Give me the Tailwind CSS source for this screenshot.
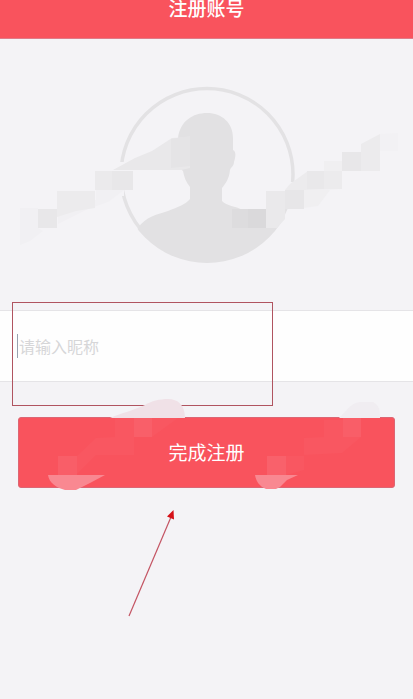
<!DOCTYPE html>
<html lang="zh-CN">
<head>
    <meta charset="UTF-8" />
    <meta name="viewport" content="width=device-width, initial-scale=1.0" />
    <title>注册账号</title>
    <script src="https://cdn.jsdelivr.net/npm/@tailwindcss/browser@4"></script>
</head>
<body class="bg-[#f4f3f6] min-h-screen overflow-x-hidden font-['Liberation_Sans','Noto_Sans_CJK_SC',sans-serif]">
    <header class="h-[39px] bg-[#f9535d] border-b border-[#e07b88] text-center">
        <h1 class="text-[19px] leading-5 font-medium text-white">注册账号</h1>
    </header>

    <main>
        <!-- Avatar -->
        <svg class="block w-full h-[271px]" viewBox="0 39 413 271" role="img" aria-label="头像">
            <defs>
                <clipPath id="avatar"><circle cx="207" cy="175" r="88" /></clipPath>
            </defs>
            <circle cx="207" cy="174.500" r="86" fill="none" stroke="#e3e2e4" stroke-width="3.500" />
            <path clip-path="url(#avatar)" fill="#e2e1e3" d="M178 138C180 121 193 113 207 113C222 113 233 123 233 138V150C236 151 236 156 234 162C234 166 231 167 230 170C229 179 226 183 222 188V201C227 206 235 206 243 210C258 214 276 219 283 225L290 270H120L138 228C145 217 158 214 168 211C178 207 186 204 190 199V187C186 182 184 177 183 171C179 168 178 163 178 158Z" />
            <path fill="#f4f3f6" d="M116 162H124V196H116ZM290 182H298V213H290Z" />
            <path fill="#e9e8ea" d="M113 170L135 158L152 151L172 138L190 137V168L181 170Z" />
            <path fill="#e5e4e6" d="M171 139L190 136V166L171 168Z" />
            <path fill="#ebeaec" d="M95 171H133V190H95Z" />
            <path fill="#e8e7e9" d="M112 171H133V190H112Z" />
            <path fill="#f1f0f3" d="M96 190H124L108 202L88 209L58 224V208L96 200Z" />
            <path fill="#ecebed" d="M57 191H95V208L76 211L57 217Z" />
            <path fill="#f1f0f3" d="M20 208H38V228L43 231L30 241L20 245Z" />
            <path fill="#e8e7e9" d="M38 209H57V228H38Z" />
            <path fill="#dddcde" d="M232 209H266V228H232Z" />
            <path fill="#dad9db" d="M248 209H266V228H248Z" />
            <path fill="#eae9eb" d="M266 191H285V219L277 228H266Z" />
            <path fill="#e7e6e8" d="M285 190H304V209H285Z" />
            <path fill="#f0eff1" d="M304 190H330L318 206L304 208ZM324 161H342V172L324 171Z" />
            <path fill="#ecebed" d="M290 184L308 171H342V189L304 190H285Z" />
            <path fill="#e9e8ea" d="M307 171H324V189H307Z" />
            <path fill="#e8e7e9" d="M342 152H361V171H342Z" />
            <path fill="#ecebed" d="M361 144L380 134V171H361Z" />
            <path fill="#f2f1f4" d="M380 134L398 133V151H380Z" />
        </svg>

        <form>
            <!-- Nickname -->
            <div class="relative h-[72px] flex items-center pl-[17px] bg-[#fefefe] border-y border-[#e5e4e7]">
                <span class="w-px h-6 bg-gray-400"></span>
                <input type="text" aria-label="昵称" placeholder="请输入昵称" class="flex-1 min-w-0 h-full bg-transparent pl-px pt-[3px] text-[16px] text-gray-700 placeholder:text-[#d6d6d8] outline-none" />
                <div class="absolute left-3 -top-[9px] w-[261px] h-[104px] border border-[#b05460] pointer-events-none"></div>
            </div>

            <!-- Submit -->
            <div class="relative pt-[35px] px-[18px]">
                <button type="submit" class="block w-full h-[71px] pt-[3px] rounded-[3px] bg-[#f9535d] border border-[#dc6674] text-[19px] text-white">完成注册</button>
                <svg class="absolute left-0 top-0 w-full h-[120px] pointer-events-none" viewBox="0 382 413 120" aria-hidden="true">
                    <path fill="#f0e1e7" d="M110 418C121 413 132 411 145 405C151 401 160 399 168 399C178 399 185 405 185 418Z" />
                    <path fill="#f95f69" d="M134 418H152V437H134Z" />
                    <path fill="#f95761" d="M115 418H134V455H96L77 474V456L96 438L115 437ZM152 418H178L152 437Z" />
                    <path fill="#f95e68" d="M58 456H77V475H58Z" />
                    <path fill="#f98891" d="M48 475H105L90 483L80 488L76 490H65C57 488 49 483 48 475Z" />
                    <path fill="#f0edf1" d="M339 418C347 411 350 403 360 402H373C380 406 380 411 380 418Z" />
                    <path fill="#f95e68" d="M343 418H361V437H343Z" />
                    <path fill="#f95761" d="M324 420H343V437H361L342 453L304 455V438L324 437ZM286 456H304V470L286 475Z" />
                    <path fill="#f9616b" d="M267 456H286V475H267Z" />
                    <path fill="#f98891" d="M255 475H298L287 480L280 487L276 489H266C259 486 256 481 255 475Z" />
                </svg>
            </div>
        </form>

        <!-- Pointer to the submit button -->
        <svg class="block w-full h-[132px]" viewBox="0 488 413 132" aria-hidden="true">
            <path d="M129 616L171 517" stroke="#c45463" stroke-width="1.2" fill="none" />
            <path d="M173.500 510L174 519.500L167 516.500Z" fill="#d51118" />
        </svg>
    </main>
</body>
</html>
